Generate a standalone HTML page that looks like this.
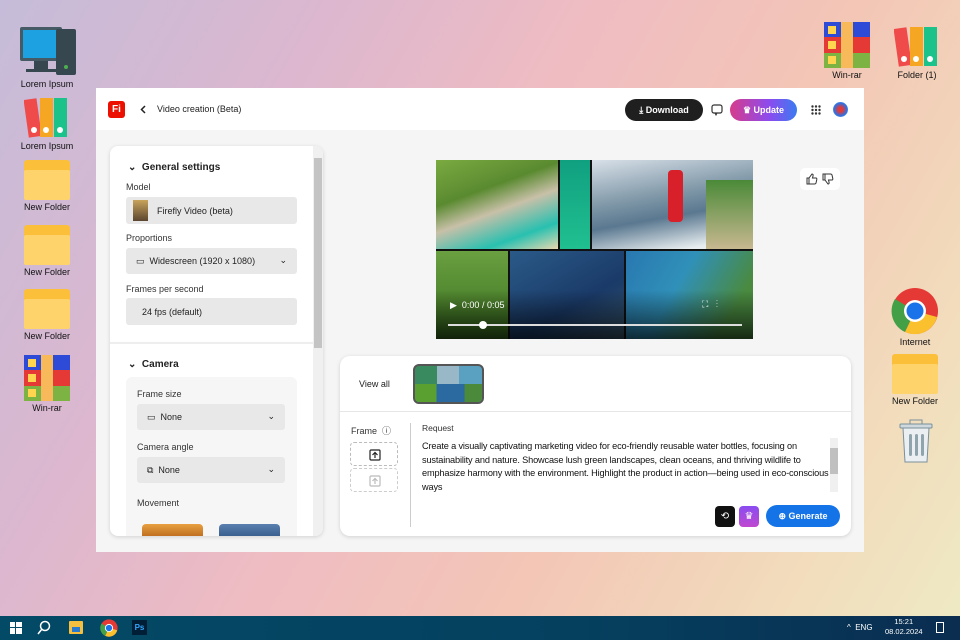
<!DOCTYPE html>
<html><head><meta charset="utf-8"><style>
*{box-sizing:border-box;margin:0;padding:0}
body{width:960px;height:640px;overflow:hidden;position:relative;font-family:"Liberation Sans",sans-serif;background:linear-gradient(120deg,#c5bcd9 0%,#dcb7cf 25%,#efbcc2 45%,#f3c6b6 65%,#f2dcbc 85%,#eeeac4 100%)}
.di{position:absolute;width:70px;text-align:center;font-size:9px;color:#111}
.di svg{display:block;margin:0 auto 2px}
.folder{width:46px;height:40px;position:relative;margin:0 auto 2px}
.folder:before{content:"";position:absolute;left:0;top:0;width:46px;height:40px;background:#fbbf3a;border-radius:3px}
.folder:after{content:"";position:absolute;left:0;top:10px;width:46px;height:30px;background:#ffd36b;border-radius:2px}
.win{position:absolute;left:96px;top:88px;width:768px;height:464px;background:#f5f5f5}
.hdr{position:absolute;left:0;top:0;width:768px;height:42px;background:#fff}
.panel{position:absolute;left:14px;top:58px;width:213px;height:390px;background:#fff;border-radius:8px;box-shadow:0 1px 4px rgba(0,0,0,.15);overflow:hidden}
.lbl{position:absolute;font-size:9px;color:#333}
.fld{position:absolute;background:#e8e8e8;border-radius:3px;font-size:9px;color:#222}
.card{position:absolute;left:244px;top:268px;width:511px;height:180px;background:#fff;border-radius:10px;box-shadow:0 1px 4px rgba(0,0,0,.15)}
.btn{position:absolute;border-radius:12px;font-size:9px;font-weight:bold;color:#fff;text-align:center;line-height:22px}
.tb{position:absolute;left:0;top:616px;width:960px;height:24px;background:linear-gradient(90deg,#034a66,#05405f 60%,#0a2d50)}
</style></head><body>

<div class="di" style="left:12px;top:25px"><svg width="62" height="52" viewBox="0 0 62 52"><rect x="4" y="2" width="42" height="34" rx="2" fill="#455a64"/><rect x="7" y="5" width="36" height="28" fill="#1da1e0"/><rect x="18" y="36" width="14" height="8" fill="#37474f"/><rect x="10" y="44" width="30" height="3" fill="#37474f"/><rect x="40" y="4" width="20" height="46" rx="2" fill="#37474f"/><circle cx="50" cy="42" r="2" fill="#4caf50"/></svg>Lorem Ipsum</div>
<div class="di" style="left:12px;top:97px"><svg width="46" height="42" viewBox="0 0 46 42"><rect x="2" y="2" width="13" height="38" fill="#ef4b4b" transform="rotate(-8 8 20)"/><rect x="16" y="1" width="13" height="39" fill="#f5a623"/><rect x="30" y="1" width="13" height="39" fill="#1bc28a"/><circle cx="10" cy="33" r="3" fill="#fff"/><circle cx="22" cy="33" r="3" fill="#fff"/><circle cx="36" cy="33" r="3" fill="#fff"/></svg>Lorem Ipsum</div>
<div class="di" style="left:12px;top:160px"><div class="folder"></div>New Folder</div>
<div class="di" style="left:12px;top:225px"><div class="folder"></div>New Folder</div>
<div class="di" style="left:12px;top:289px"><div class="folder"></div>New Folder</div>
<div class="di" style="left:12px;top:355px"><svg width="46" height="46" viewBox="0 0 46 46"><rect x="0" y="0" width="46" height="15" fill="#2e4bd8"/><rect x="0" y="15" width="46" height="16" fill="#e53935"/><rect x="0" y="31" width="46" height="15" fill="#7cb342"/><rect x="17" y="0" width="12" height="46" fill="#f7b95a"/><rect x="4" y="4" width="8" height="8" fill="#ffd54f"/><rect x="4" y="19" width="8" height="8" fill="#ffd54f"/><rect x="4" y="34" width="8" height="8" fill="#ffd54f"/></svg>Win-rar</div>
<div class="di" style="left:812px;top:22px"><svg width="46" height="46" viewBox="0 0 46 46"><rect x="0" y="0" width="46" height="15" fill="#2e4bd8"/><rect x="0" y="15" width="46" height="16" fill="#e53935"/><rect x="0" y="31" width="46" height="15" fill="#7cb342"/><rect x="17" y="0" width="12" height="46" fill="#f7b95a"/><rect x="4" y="4" width="8" height="8" fill="#ffd54f"/><rect x="4" y="19" width="8" height="8" fill="#ffd54f"/><rect x="4" y="34" width="8" height="8" fill="#ffd54f"/></svg>Win-rar</div>
<div class="di" style="left:882px;top:26px"><svg width="46" height="42" viewBox="0 0 46 42"><rect x="2" y="2" width="13" height="38" fill="#ef4b4b" transform="rotate(-8 8 20)"/><rect x="16" y="1" width="13" height="39" fill="#f5a623"/><rect x="30" y="1" width="13" height="39" fill="#1bc28a"/><circle cx="10" cy="33" r="3" fill="#fff"/><circle cx="22" cy="33" r="3" fill="#fff"/><circle cx="36" cy="33" r="3" fill="#fff"/></svg>Folder (1)</div>
<div class="di" style="left:880px;top:287px"><svg width="48" height="48" viewBox="0 0 48 48"><circle cx="24" cy="24" r="23" fill="#e53935"/><path d="M24 24 L4 12 A23 23 0 0 0 14 45 Z" fill="#43a047"/><path d="M24 24 L14 45 A23 23 0 0 0 46 30 Z" fill="#fbc02d"/><circle cx="24" cy="24" r="11" fill="#fff"/><circle cx="24" cy="24" r="8.5" fill="#1a73e8"/></svg>Internet</div>
<div class="di" style="left:880px;top:354px"><div class="folder"></div>New Folder</div>
<svg style="position:absolute;left:896px;top:418px" width="40" height="46" viewBox="0 0 40 46"><rect x="4" y="6" width="32" height="4" rx="1" fill="#cfd8dc" stroke="#78909c"/><rect x="14" y="2" width="12" height="4" fill="none" stroke="#78909c"/><path d="M7 10 L9 44 H31 L33 10Z" fill="#eceff1" stroke="#78909c"/><rect x="13" y="16" width="3" height="22" rx="1.5" fill="#90a4ae"/><rect x="19" y="16" width="3" height="22" rx="1.5" fill="#90a4ae"/><rect x="25" y="16" width="3" height="22" rx="1.5" fill="#90a4ae"/></svg>

<div class="win">
 <div class="hdr">
  <div style="position:absolute;left:12px;top:13px;width:17px;height:17px;background:#eb1000;border-radius:3px;color:#fff;font-size:10px;font-weight:bold;text-align:center;line-height:17px">Fi</div>
  <svg style="position:absolute;left:44px;top:17px" width="6" height="9"><path d="M5 1 L1.5 4.5 L5 8" fill="none" stroke="#222" stroke-width="1.5"/></svg>
  <div style="position:absolute;left:61px;top:16px;font-size:9px;color:#222">Video creation (Beta)</div>
  <div class="btn" style="left:529px;top:11px;width:78px;background:#1f1f1f">⤓ Download</div>
  <svg style="position:absolute;left:615px;top:16px" width="12" height="12" viewBox="0 0 12 12"><rect x="1" y="1" width="10" height="8" rx="2" fill="none" stroke="#333" stroke-width="1.2"/><path d="M4 9 L5 11 L6 9" fill="none" stroke="#333"/></svg>
  <div class="btn" style="left:634px;top:11px;width:67px;background:linear-gradient(90deg,#d63c8c,#8a4cf0 60%,#3b7bf0)">♛ Update</div>
  <svg style="position:absolute;left:715px;top:17px" width="10" height="10"><g fill="#333"><circle cx="1.5" cy="1.5" r="1.2"/><circle cx="5" cy="1.5" r="1.2"/><circle cx="8.5" cy="1.5" r="1.2"/><circle cx="1.5" cy="5" r="1.2"/><circle cx="5" cy="5" r="1.2"/><circle cx="8.5" cy="5" r="1.2"/><circle cx="1.5" cy="8.5" r="1.2"/><circle cx="5" cy="8.5" r="1.2"/><circle cx="8.5" cy="8.5" r="1.2"/></g></svg>
  <div style="position:absolute;left:737px;top:14px;width:15px;height:15px;border-radius:50%;background:radial-gradient(circle,#e53935 20%,#2f6fe0 60%,#9fd0f5)"></div>
 </div>

 <div class="panel">
  <div style="position:absolute;left:18px;top:16px;font-size:10px;font-weight:bold;color:#222">⌄&nbsp; General settings</div>
  <div class="lbl" style="left:16px;top:36px">Model</div>
  <div class="fld" style="left:16px;top:51px;width:171px;height:27px"><div style="position:absolute;left:7px;top:3px;width:15px;height:21px;background:linear-gradient(#c9a35b,#5b4630)"></div><span style="position:absolute;left:31px;top:9px">Firefly Video (beta)</span></div>
  <div class="lbl" style="left:16px;top:87px">Proportions</div>
  <div class="fld" style="left:16px;top:102px;width:171px;height:26px"><span style="position:absolute;left:10px;top:8px">▭ &nbsp;Widescreen (1920 x 1080)</span><span style="position:absolute;right:10px;top:7px">⌄</span></div>
  <div class="lbl" style="left:16px;top:138px">Frames per second</div>
  <div class="fld" style="left:16px;top:152px;width:171px;height:27px"><span style="position:absolute;left:16px;top:9px">24 fps (default)</span></div>
  <div style="position:absolute;left:0;top:196px;width:203px;height:2px;background:#eee"></div>
  <div style="position:absolute;left:18px;top:213px;font-size:10px;font-weight:bold;color:#222">⌄&nbsp; Camera</div>
  <div style="position:absolute;left:16px;top:231px;width:171px;height:170px;background:#f6f6f6;border-radius:6px"></div>
  <div class="lbl" style="left:27px;top:243px">Frame size</div>
  <div class="fld" style="left:27px;top:258px;width:148px;height:26px"><span style="position:absolute;left:10px;top:8px">▭ &nbsp;None</span><span style="position:absolute;right:10px;top:7px">⌄</span></div>
  <div class="lbl" style="left:27px;top:296px">Camera angle</div>
  <div class="fld" style="left:27px;top:311px;width:148px;height:26px"><span style="position:absolute;left:10px;top:8px">⧉ &nbsp;None</span><span style="position:absolute;right:10px;top:7px">⌄</span></div>
  <div class="lbl" style="left:27px;top:352px">Movement</div>
  <div style="position:absolute;left:32px;top:378px;width:61px;height:12px;border-radius:4px 4px 0 0;background:linear-gradient(#e8a040,#c07020)"></div>
  <div style="position:absolute;left:109px;top:378px;width:61px;height:12px;border-radius:4px 4px 0 0;background:linear-gradient(#5a80b0,#3a6090)"></div>
  <div style="position:absolute;left:203px;top:0;width:10px;height:390px;background:#f0f0f0"></div>
  <div style="position:absolute;left:204px;top:12px;width:8px;height:190px;background:#c4c4c4"></div>
 </div>

 <div style="position:absolute;left:340px;top:72px;width:317px;height:179px;background:#111;overflow:hidden">
  <div style="position:absolute;left:0;top:0;width:122px;height:89px;background:linear-gradient(160deg,#7aaa40 0%,#5a8a30 35%,#c8c0a8 55%,#28c0b0 80%,#e8d8b0)"></div>
  <div style="position:absolute;left:124px;top:0;width:30px;height:89px;background:linear-gradient(#10a080,#20c090)"></div>
  <div style="position:absolute;left:156px;top:0;width:161px;height:89px;background:linear-gradient(170deg,#d8e0e8 0%,#8098a8 40%,#5a7890 60%,#e8eef0 90%)"></div>
  <div style="position:absolute;left:232px;top:10px;width:15px;height:52px;background:#d8202a;border-radius:4px"></div>
  <div style="position:absolute;left:270px;top:20px;width:47px;height:69px;background:linear-gradient(#4a8a38,#c8b890)"></div>
  <div style="position:absolute;left:0;top:91px;width:72px;height:88px;background:linear-gradient(#6aa040,#3a7020)"></div>
  <div style="position:absolute;left:74px;top:91px;width:114px;height:88px;background:linear-gradient(150deg,#2a5a88,#1a3a68 60%,#3a5a70)"></div>
  <div style="position:absolute;left:190px;top:91px;width:127px;height:88px;background:linear-gradient(120deg,#2878b0,#3090b8 40%,#4a8a40 80%)"></div>
  <div style="position:absolute;left:0;top:130px;width:317px;height:49px;background:linear-gradient(rgba(0,0,0,0),rgba(0,0,0,.7))"></div>
  <div style="position:absolute;left:14px;top:140px;color:#fff;font-size:9px">▶ &nbsp;0:00 / 0:05</div>
  <div style="position:absolute;left:266px;top:139px;color:#fff;font-size:9px">⛶ &nbsp; ⋮</div>
  <div style="position:absolute;left:12px;top:164px;width:294px;height:2px;background:#ddd"></div>
  <div style="position:absolute;left:43px;top:161px;width:8px;height:8px;border-radius:50%;background:#fff"></div>
 </div>
 <div style="position:absolute;left:704px;top:80px;width:40px;height:22px;background:#fff;border-radius:5px">
  <svg style="position:absolute;left:6px;top:5px" width="12" height="12" viewBox="0 0 12 12"><path d="M1 5 H3 V11 H1Z M3 5 L6 1 Q7.5 1 7 3 L6.5 5 H10 Q11 5 10.8 6.5 L10 10 Q9.7 11 8.5 11 H3" fill="none" stroke="#333" stroke-width="1"/></svg>
  <svg style="position:absolute;left:22px;top:5px" width="12" height="12" viewBox="0 0 12 12"><path d="M1 7 H3 V1 H1Z M3 7 L6 11 Q7.5 11 7 9 L6.5 7 H10 Q11 7 10.8 5.5 L10 2 Q9.7 1 8.5 1 H3" fill="none" stroke="#333" stroke-width="1"/></svg>
 </div>

 <div class="card">
  <div style="position:absolute;left:19px;top:23px;font-size:9px;color:#222">View all</div>
  <div style="position:absolute;left:73px;top:8px;width:71px;height:40px;border:2px solid #555;border-radius:6px;background:linear-gradient(90deg,#3a8a60 0 33%,#98b8c8 33% 66%,#5aa0c0 66%);overflow:hidden"><div style="position:absolute;left:0;top:18px;width:71px;height:22px;background:linear-gradient(90deg,#5aa030 0 30%,#2a6aa0 30% 70%,#4a8a3a 70%)"></div></div>
  <div style="position:absolute;left:0;top:55px;width:511px;height:1px;background:#e6e6e6"></div>
  <div style="position:absolute;left:11px;top:68px;font-size:9px;color:#333">Frame &nbsp;ⓘ</div>
  <div style="position:absolute;left:10px;top:86px;width:48px;height:24px;border:1px dashed #bbb;border-radius:4px"><svg style="position:absolute;left:18px;top:5px" width="12" height="13" viewBox="0 0 12 13"><rect x="1" y="2" width="10" height="10" rx="1" fill="none" stroke="#222" stroke-width="1.2"/><path d="M6 10 V5 M3.5 7 L6 4.5 L8.5 7" fill="none" stroke="#222" stroke-width="1.2"/></svg></div>
  <div style="position:absolute;left:10px;top:112px;width:48px;height:24px;border:1px dashed #ccc;border-radius:4px"><svg style="position:absolute;left:18px;top:5px" width="12" height="13" viewBox="0 0 12 13"><rect x="1" y="2" width="10" height="10" rx="1" fill="none" stroke="#bbb" stroke-width="1.2"/><path d="M6 10 V5 M3.5 7 L6 4.5 L8.5 7" fill="none" stroke="#bbb" stroke-width="1.2"/></svg></div>
  <div style="position:absolute;left:70px;top:67px;width:1px;height:104px;background:#ccc"></div>
  <div style="position:absolute;left:82px;top:67px;font-size:8.5px;color:#333">Request</div>
  <div style="position:absolute;left:82px;top:84px;width:410px;font-size:9.2px;letter-spacing:-0.15px;line-height:13.5px;color:#111">Create a visually captivating marketing video for eco-friendly reusable water bottles, focusing on sustainability and nature. Showcase lush green landscapes, clean oceans, and thriving wildlife to emphasize harmony with the environment. Highlight the product in action—being used in eco-conscious ways</div>
  <div style="position:absolute;left:490px;top:82px;width:8px;height:54px;background:#f0f0f0"></div>
  <div style="position:absolute;left:490px;top:92px;width:8px;height:26px;background:#c0c0c0"></div>
  <div style="position:absolute;left:375px;top:150px;width:20px;height:21px;background:#111;border-radius:4px;color:#fff;font-size:10px;text-align:center;line-height:21px">⟲</div>
  <div style="position:absolute;left:399px;top:150px;width:20px;height:21px;background:linear-gradient(#8a4cf0,#c048d0);border-radius:4px;color:#fff;font-size:10px;text-align:center;line-height:21px">♛</div>
  <div class="btn" style="left:426px;top:149px;width:74px;background:#1473e6">⊕ Generate</div>
 </div>
</div>

<div class="tb">
 <svg style="position:absolute;left:10px;top:6px" width="12" height="12"><g fill="#fff"><rect x="0" y="0" width="5" height="5"/><rect x="6" y="0" width="6" height="5"/><rect x="0" y="6" width="5" height="6"/><rect x="6" y="6" width="6" height="6"/></g></svg>
 <svg style="position:absolute;left:37px;top:4px" width="14" height="16"><circle cx="8" cy="6" r="4.5" fill="none" stroke="#fff" stroke-width="1.5"/><path d="M5 9 L1 14" stroke="#fff" stroke-width="1.5"/></svg>
 <div style="position:absolute;left:69px;top:5px;width:14px;height:13px;background:#f5c040;border-radius:1px"><div style="position:absolute;left:3px;top:6px;width:8px;height:5px;background:#2a7ad0"></div></div>
 <svg style="position:absolute;left:100px;top:3px" width="18" height="18" viewBox="0 0 48 48"><circle cx="24" cy="24" r="23" fill="#e53935"/><path d="M24 24 L4 12 A23 23 0 0 0 14 45 Z" fill="#43a047"/><path d="M24 24 L14 45 A23 23 0 0 0 46 30 Z" fill="#fbc02d"/><circle cx="24" cy="24" r="11" fill="#fff"/><circle cx="24" cy="24" r="8.5" fill="#1a73e8"/></svg>
 <div style="position:absolute;left:132px;top:4px;width:15px;height:15px;background:#001e36;color:#31a8ff;font-size:8px;font-weight:bold;line-height:15px;text-align:center">Ps</div>
 <div style="position:absolute;left:847px;top:7px;font-size:8px;color:#fff">^ &nbsp;ENG</div>
 <div style="position:absolute;left:885px;top:1px;font-size:7.5px;color:#fff;text-align:center;line-height:10px">15:21<br>08.02.2024</div>
 <div style="position:absolute;left:936px;top:6px;width:8px;height:11px;border:1px solid #fff"></div>
</div>
</body></html>
